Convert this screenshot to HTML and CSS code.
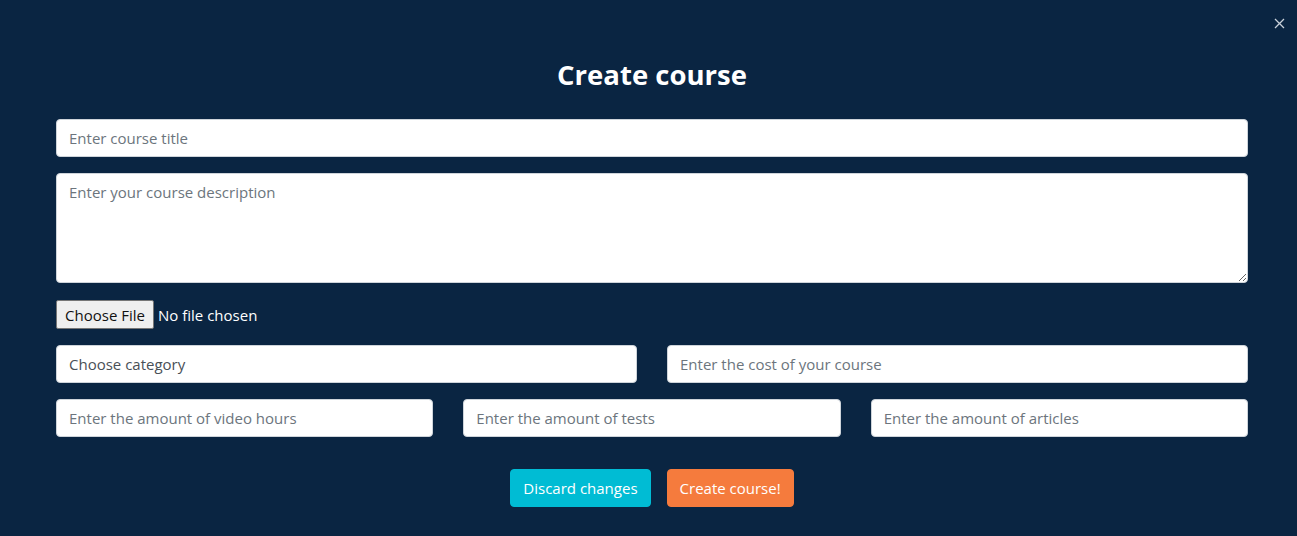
FILE: index.html
```html
<!DOCTYPE html>
<html lang="en">
<head>
<meta charset="utf-8">
<title>Create course</title>
<link rel="stylesheet" href="styles.css">
</head>
<body>
<div class="modal">
  <button class="close" aria-label="Close">
    <svg width="11" height="11" viewBox="0 0 11 11"><path d="M1 1L10 10M10 1L1 10" stroke="#c9d1da" stroke-width="1.3" fill="none"/></svg>
  </button>
  <h2 class="title">Create course</h2>
  <form class="form">
    <input class="field" type="text" placeholder="Enter course title">
    <textarea class="field area" placeholder="Enter your course description"></textarea>
    <div class="file">
      <span class="file-btn">Choose File</span>
      <span class="file-name">No file chosen</span>
    </div>
    <div class="row two">
      <input class="field value" type="text" value="Choose category">
      <input class="field" type="text" placeholder="Enter the cost of your course">
    </div>
    <div class="row three">
      <input class="field" type="text" placeholder="Enter the amount of video hours">
      <input class="field" type="text" placeholder="Enter the amount of tests">
      <input class="field" type="text" placeholder="Enter the amount of articles">
    </div>
    <div class="actions">
      <button type="button" class="btn discard">Discard changes</button>
      <button type="button" class="btn create">Create course!</button>
    </div>
  </form>
</div>
</body>
</html>
```
FILE: styles.css
```css
html, body {
  margin: 0;
  padding: 0;
  height: 100%;
  background: #0a2542;
}
body {
  font-family: "Open Sans", "Noto Sans", sans-serif;
}
.modal {
  position: relative;
  box-sizing: border-box;
  min-height: 536px;
  padding: 58px 49px 0 56px;
  background: #0a2542;
}
.close {
  position: absolute;
  top: 17px;
  right: 11px;
  width: 13px;
  height: 13px;
  padding: 1px;
  border: 0;
  background: none;
  display: flex;
}
.title {
  margin: 0 0 27px;
  text-align: center;
  color: #fff;
  font-size: 27.5px;
  line-height: 34px;
  font-weight: 700;
}
.form {
  display: flex;
  flex-direction: column;
  gap: 16px;
}
.field {
  box-sizing: border-box;
  display: block;
  width: 100%;
  height: 38px;
  padding: 6px 12px;
  border: 1px solid #ced4da;
  border-radius: 4px;
  background: #fff;
  font-family: inherit;
  font-size: 15px;
  color: #495057;
  outline: none;
}
.field::placeholder {
  color: #6c757d;
  opacity: 1;
}
.area {
  height: 110px;
  resize: vertical;
  padding-top: 8px;
}
.file {
  display: flex;
  align-items: center;
  gap: 4px;
  height: 29px;
  margin-top: 1px;
}
.file-btn {
  box-sizing: border-box;
  height: 29px;
  width: 98px;
  display: flex;
  align-items: center;
  justify-content: center;
  background: #efefef;
  border: 1px solid #767676;
  border-radius: 2px;
  color: #111;
  font-size: 15px;
}
.file-name {
  color: #fff;
  font-size: 15px;
}
.row {
  display: grid;
  gap: 30px;
}
.two { grid-template-columns: 1fr 1fr; }
.three { grid-template-columns: 1fr 1fr 1fr; }
.actions {
  display: flex;
  justify-content: center;
  gap: 16px;
  margin-top: 16px;
}
.btn {
  height: 38px;
  padding: 0 12px;
  border: 1px solid transparent;
  border-radius: 4px;
  font-family: inherit;
  font-size: 15px;
  color: #fff;
}
.discard { background: #00bcd4; border-color: #00bcd4; }
.create { background: #f57b3d; border-color: #f57b3d; }
```
